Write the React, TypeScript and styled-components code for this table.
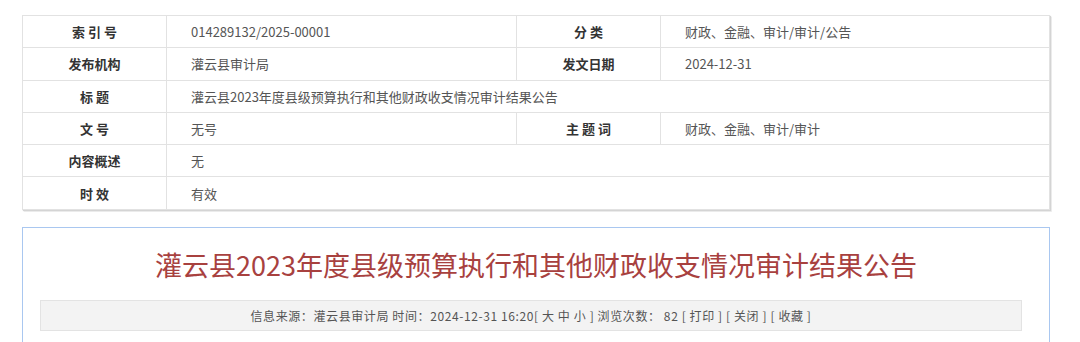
import React from "react"
import styled, { createGlobalStyle } from "styled-components"

const GlobalStyle = createGlobalStyle`
  html, body {
    margin: 0;
    padding: 0;
    background: #fff;
  }
  body {
    font-family: "Noto Sans CJK SC", "Noto Sans", sans-serif;
    color: #333;
  }
`

const Page = styled.div`
  padding: 15px 0 0 22px;
  width: 1028px;
`

const InfoTable = styled.div`
  display: grid;
  grid-template-columns: 144px 350px 144px 1fr;
  grid-auto-rows: 32.3px;
  border-top: 1px solid #e2e2e2;
  border-left: 1px solid #e2e2e2;
  box-shadow: 1px 1px 1px #d4d4d4, 2px 2px 0 #f0f0f0;
`

const Label = styled.div`
  display: flex;
  align-items: center;
  justify-content: center;
  border-right: 1px solid #e2e2e2;
  border-bottom: 1px solid #e2e2e2;
  font-size: 13px;
  font-weight: 700;
  color: #333;
  white-space: pre;
`

const Value = styled.div<{ wide?: boolean }>`
  display: flex;
  align-items: center;
  padding-left: 24px;
  border-right: 1px solid #e2e2e2;
  border-bottom: 1px solid #e2e2e2;
  font-size: 13px;
  color: #555;
  grid-column: ${({ wide }) => (wide ? "2 / 5" : "auto")};
`

const Article = styled.div`
  margin-top: 17px;
  border: 1px solid #a9c7f0;
  border-bottom: none;
  padding: 18px 0 40px;
`

const Title = styled.h1`
  margin: 0;
  text-align: center;
  font-size: 27px;
  line-height: 38px;
  font-weight: 400;
  color: #a8413f;
`

const MetaBar = styled.div`
  margin: 16px 27px 0 17px;
  height: 29px;
  display: flex;
  align-items: center;
  justify-content: center;
  background: #f3f3f3;
  border: 1px solid #e3e3e3;
  font-size: 12px;
  letter-spacing: 0.6px;
  color: #555;
  white-space: pre;
`

const rows: Array<Array<{ label: string; value: string }>> = [
  [
    { label: "索 引 号", value: "014289132/2025-00001" },
    { label: "分 类", value: "财政、金融、审计/审计/公告" },
  ],
  [
    { label: "发布机构", value: "灌云县审计局" },
    { label: "发文日期", value: "2024-12-31" },
  ],
  [{ label: "标 题", value: "灌云县2023年度县级预算执行和其他财政收支情况审计结果公告" }],
  [
    { label: "文 号", value: "无号" },
    { label: "主 题 词", value: "财政、金融、审计/审计" },
  ],
  [{ label: "内容概述", value: "无" }],
  [{ label: "时 效", value: "有效" }],
]

export default function App() {
  return (
    <>
      <GlobalStyle />
      <Page>
        <InfoTable>
          {rows.map((row, i) =>
            row.map((cell, j) => (
              <React.Fragment key={`${i}-${j}`}>
                <Label>{cell.label}</Label>
                <Value wide={row.length === 1}>{cell.value}</Value>
              </React.Fragment>
            ))
          )}
        </InfoTable>

        <Article>
          <Title>灌云县2023年度县级预算执行和其他财政收支情况审计结果公告</Title>
          <MetaBar>
            信息来源：灌云县审计局 时间：2024-12-31 16:20[ 大 中 小 ] 浏览次数： 82 [ 打印 ] [ 关闭 ] [ 收藏 ]
          </MetaBar>
        </Article>
      </Page>
    </>
  )
}
